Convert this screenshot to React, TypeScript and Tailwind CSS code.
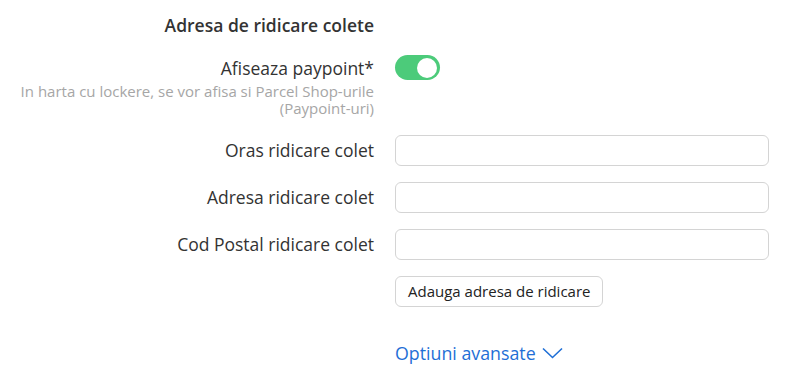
const FIELDS = ["Oras ridicare colet", "Adresa ridicare colet", "Cod Postal ridicare colet"];

export default function App() {
  return (
    <div className="w-[793px] h-[392px] bg-white font-['Open_Sans',sans-serif] text-[#333] overflow-hidden">
      <div className="grid grid-cols-[374px_374px] items-start gap-x-[21px] pt-[13px]">
        {/* Section title */}
        <div className="text-right text-[17.5px] font-semibold leading-[24px] text-[#333] whitespace-nowrap">
          Adresa de ridicare colete
        </div>
        <div />

        {/* Paypoint toggle */}
        <div className="mt-[19px] text-right">
          <div className="text-[17.5px] leading-[24px] text-[#333]">Afiseaza paypoint*</div>
          <div className="mt-[3px] text-[15px] leading-[17px] text-[#a6a6a6] whitespace-nowrap">
            <div>In harta cu lockere, se vor afisa si Parcel Shop-urile</div>
            <div>(Paypoint-uri)</div>
          </div>
        </div>
        <div className="mt-[18px]">
          <button className="w-[45px] h-[25px] rounded-full bg-[#4ccb7a] flex items-center justify-end px-[3px]">
            <span className="w-[20px] h-[20px] rounded-full bg-white" />
          </button>
        </div>

        {/* Inputs */}
        {FIELDS.map((label, i) => (
          <div key={label} className="contents">
            <div
              className={`${i === 0 ? "mt-[18px]" : "mt-[16px]"} h-[31px] flex items-center justify-end text-[17.5px] text-[#333] whitespace-nowrap`}
            >
              {label}
            </div>
            <div className={i === 0 ? "mt-[18px]" : "mt-[16px]"}>
              <input className="block w-full h-[31px] rounded-[6px] border border-[#d4d4d4] px-2 outline-none" />
            </div>
          </div>
        ))}

        <div />
        <div className="mt-[16px]">
          <button className="h-[31px] px-[12px] rounded-[6px] border border-[#d4d4d4] bg-white text-[15px] text-[#222]">
            Adauga adresa de ridicare
          </button>
        </div>

        <div />
        <div className="mt-[34px] flex items-center gap-[6px] text-[17.8px] leading-[24px] text-[#1f6fd6]">
          Optiuni avansate
          <svg width="21" height="12" viewBox="0 0 21 12" fill="none" stroke="currentColor" strokeWidth="1.6">
            <polyline points="1,1.5 10.5,10.5 20,1.5" />
          </svg>
        </div>
      </div>
    </div>
  );
}
